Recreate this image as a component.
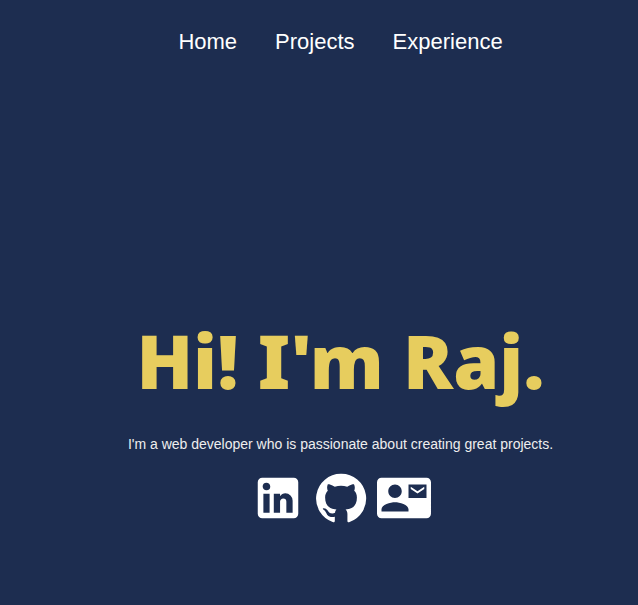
<svelte:head>
  <title>Raj</title>
</svelte:head>

<div class="page">
  <nav aria-label="Main">
    <a href="#home">Home</a>
    <a href="#projects">Projects</a>
    <a href="#experience">Experience</a>
  </nav>

  <main>
    <h1>Hi! I'm Raj.</h1>
    <p>I'm a web developer who is passionate about creating great projects.</p>
    <div class="links">
      <a href="#linkedin" aria-label="LinkedIn">
        <svg width="54" height="54" viewBox="0 0 24 24"><path d="M19 3a2 2 0 0 1 2 2v14a2 2 0 0 1-2 2H5a2 2 0 0 1-2-2V5a2 2 0 0 1 2-2h14m-.5 15.5v-5.3a3.26 3.26 0 0 0-3.26-3.26c-.85 0-1.84.52-2.32 1.3v-1.11h-2.79v8.37h2.79v-4.93c0-.77.62-1.4 1.39-1.4a1.4 1.4 0 0 1 1.4 1.4v4.93h2.79M6.88 8.56a1.68 1.68 0 0 0 1.68-1.68c0-.93-.75-1.69-1.68-1.69a1.69 1.69 0 0 0-1.69 1.69c0 .93.76 1.68 1.69 1.68m1.39 9.94v-8.37H5.5v8.37h2.77z"/></svg>
      </a>
      <a href="#github" aria-label="GitHub">
        <svg width="54" height="54" viewBox="0 0 24 24"><path d="M12 1.27a11 11 0 0 0-3.48 21.46c.55.09.73-.28.73-.55v-1.84c-3.03.64-3.67-1.46-3.67-1.46-.55-1.29-1.28-1.65-1.28-1.65-.92-.65.1-.65.1-.65 1.1 0 1.73 1.1 1.73 1.1.92 1.65 2.57 1.2 3.21.92a2 2 0 0 1 .64-1.47c-2.47-.27-5.04-1.19-5.04-5.5 0-1.1.46-2.1 1.2-2.84a3.76 3.76 0 0 1 0-2.93s.91-.28 3.11 1.1c1.8-.49 3.7-.49 5.5 0 2.1-1.38 3.02-1.1 3.02-1.1a3.76 3.76 0 0 1 .1 2.93c.83.74 1.2 1.74 1.2 2.94 0 4.21-2.57 5.13-5.04 5.4.45.37.82.92.82 2.02v3.03c0 .27.1.64.73.55A11 11 0 0 0 12 1.27"/></svg>
      </a>
      <a href="#contact" aria-label="Contact">
        <svg width="54" height="54" viewBox="0 0 24 24"><path d="M21 8V7l-3 2-3-2v1l3 2 3-2zm1-5H2C.9 3 0 3.9 0 5v14c0 1.1.9 2 2 2h20c1.1 0 1.99-.9 1.99-2L24 5c0-1.1-.9-2-2-2zM8 6c1.66 0 3 1.34 3 3s-1.34 3-3 3-3-1.34-3-3 1.34-3 3-3zm6 12H2v-1c0-2 4-3.1 6-3.1s6 1.1 6 3.1v1zm8-6h-8V6h8v6z"/></svg>
      </a>
    </div>
  </main>
</div>

<style>
  :global(body) {
    margin: 0;
    background: #1d2d50;
  }
  .page {
    box-sizing: border-box;
    min-height: 100vh;
    padding: 28px 0 72px 43px;
    color: #fff;
    font-family: "Liberation Sans", Arial, sans-serif;
  }
  nav {
    display: flex;
    justify-content: center;
    gap: 38px;
  }
  nav a {
    color: inherit;
    text-decoration: none;
    font-size: 22px;
    line-height: 28px;
  }
  main {
    padding-top: 260px;
    text-align: center;
  }
  h1 {
    margin: 0;
    color: #e7cd5e;
    font-family: "Noto Sans", Tahoma, sans-serif;
    font-size: 74px;
    font-weight: 900;
    line-height: 90px;
  }
  p {
    margin: 28px 0 0;
    color: #eee;
    font-size: 14px;
    line-height: 20px;
  }
  .links {
    display: flex;
    justify-content: center;
    gap: 9px;
    margin-top: 17px;
  }
  .links a,
  svg {
    display: block;
    fill: #fff;
  }
</style>
